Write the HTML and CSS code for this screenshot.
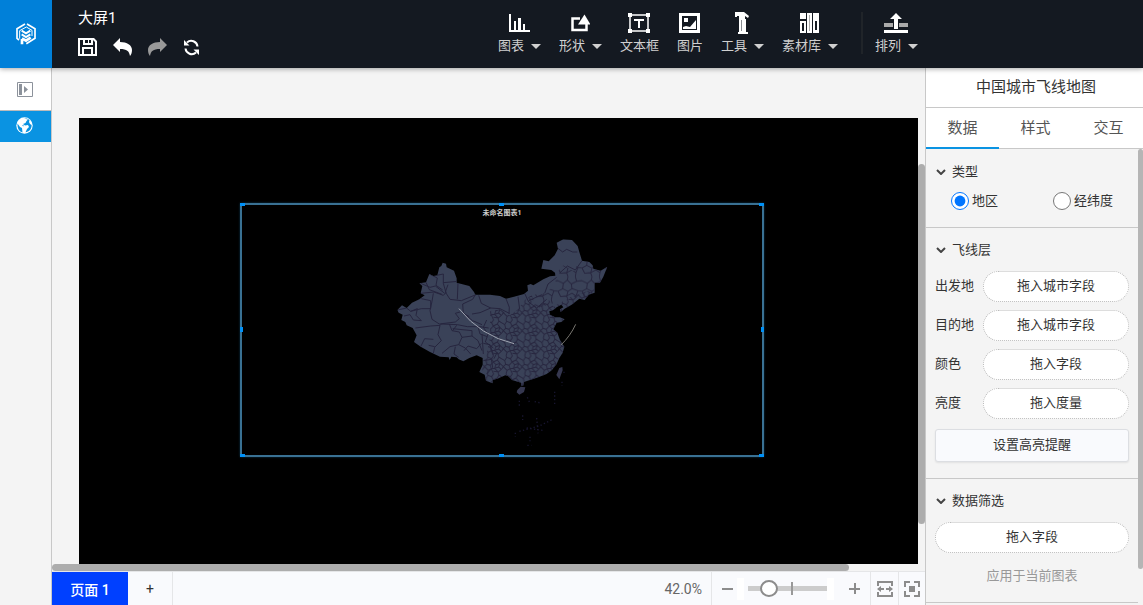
FILE: index.html
```html
<!DOCTYPE html>
<html lang="zh-CN">
<head>
<meta charset="utf-8">
<meta name="viewport" content="width=device-width, initial-scale=1">
<title>大屏1</title>
<link rel="stylesheet" href="styles.css">
</head>
<body>
<div class="app">
  <header class="topbar">
    <a class="logo" href="#" aria-label="首页">
      <svg width="20" height="22" viewBox="0 0 60 66" fill="none" stroke="#fff" stroke-width="5">
        <path d="M27 3 3 17v29l6 5M33 3l24 14v29L31 62"/>
        <path d="M31 12 11 23v24M31 12l17 10v17" stroke-width="3"/>
        <path d="M18 64V48M18 46l12 7 14-9" stroke-width="8"/>
        <path d="m17 23 13 8 13-8M17 34l13 8 13-8" stroke-width="6"/>
      </svg>
    </a>
    <div class="doc">
      <h1 class="doc-title">大屏1</h1>
      <div class="doc-actions">
        <button class="icon-btn" aria-label="保存">
          <svg width="19" height="18" viewBox="0 0 19 18"><path fill="#fff" fill-rule="evenodd" d="M0 0h16l3 3v15H0zM2 2v14h2V9h11v7h2V4l-2-2v5H5V2zM7 2v3h3V2zm4 0v3h2V2zM6 11v5h7v-5z"/></svg>
        </button>
        <button class="icon-btn" aria-label="撤销">
          <svg width="19" height="18" viewBox="0 0 19 18"><path fill="#fff" d="M0 7 7 0v4c7 0 12 3 12 8 0 3-1 5-2 6-1-5-3-7-10-7v3z"/></svg>
        </button>
        <button class="icon-btn" aria-label="重做" disabled>
          <svg width="19" height="18" viewBox="0 0 19 18"><path fill="#999" d="M19 7 12 0v4C5 4 0 7 0 12c0 3 1 5 2 6 1-5 3-7 10-7v3z"/></svg>
        </button>
        <button class="icon-btn" aria-label="刷新">
          <svg width="17" height="17" viewBox="0 0 17 17"><path fill="none" stroke="#fff" stroke-width="2" d="M4 3.500a6.300 6.300 0 0 1 10.500 4M13 13.500A6.300 6.300 0 0 1 2.500 9.500"/><path fill="#fff" d="M1 1v5.500h5.500zM16 16v-5.500h-5.500z"/></svg>
        </button>
      </div>
    </div>
    <nav class="toolbar" aria-label="组件">
      <button class="tool"><svg width="22" height="20" viewBox="0 0 22 20"><path fill="#fff" d="M1 1h2v16h19v2H1zM6 8h2v9H6zM10 5h3v12h-3zM15 11h2v6h-2z"/></svg><span class="tool-label">图表<i class="caret"></i></span></button>
      <button class="tool"><svg width="20" height="20" viewBox="0 0 20 20"><path fill="none" stroke="#fff" stroke-width="2.500" d="M10 5.500H2.500v11.500h14v-6"/><path fill="#fff" d="m14.500 1.500 6 10H8z"/></svg><span class="tool-label">形状<i class="caret"></i></span></button>
      <button class="tool"><svg width="24" height="22" viewBox="0 0 24 22"><path fill="none" stroke="#fff" stroke-width="1.500" d="M3 3h18v16H3z"/><path fill="#fff" d="M1 1h4v4H1zM19 1h4v4h-4zM1 17h4v4H1zM19 17h4v4h-4zM7 7h10v2h-4v7h-2V9H7z"/></svg><span class="tool-label">文本框</span></button>
      <button class="tool"><svg width="21" height="20" viewBox="0 0 21 20"><path fill="#fff" fill-rule="evenodd" d="M0 0h21v20H0zm3 3v14h15V3z"/><path fill="#fff" d="M5 5h4v4H5zM4 14l3-1 4 1 6-7v9H4z"/></svg><span class="tool-label">图片</span></button>
      <button class="tool"><svg width="14" height="22" viewBox="0 0 14 22"><path fill="#fff" d="M0 0h9l5 4-1 2-3-2v3H4V4H2v1H0zM4 7h7v13h2v2H3v-2h1z"/><path stroke="#8a8d92" d="M6.500 8v11"/></svg><span class="tool-label">工具<i class="caret"></i></span></button>
      <button class="tool"><svg width="19" height="20" viewBox="0 0 19 20"><path fill="#fff" fill-rule="evenodd" d="M0 0h6v6H0zM0 8h6v12H0zm2 2v8h2v-8zM7 0h5v20H7zM13 0h6v20h-6zm2 8v9h2V8z"/><path fill="#aaa" d="M9 2h1v16H9z"/></svg><span class="tool-label">素材库<i class="caret"></i></span></button>
      <span class="tool-divider"></span>
      <button class="tool"><svg width="24" height="20" viewBox="0 0 24 20"><path fill="#fff" d="M12 0 6 6h4v10h4V6h4zM0 17h24v3H0z"/><path fill="#aaa" d="M0 10h9v4H0zM15 10h9v4h-9z"/></svg><span class="tool-label">排列<i class="caret"></i></span></button>
    </nav>
  </header>

  <aside class="rail">
    <button class="rail-btn rail-toggle" aria-label="展开">
      <svg width="16" height="15" viewBox="0 0 16 15"><path fill="none" stroke="#8c929b" d="M.5.500h15v14H.5z"/><path fill="#8c929b" d="M2 2h3v11H2zM7 4l4 3.500L7 11z"/></svg>
    </button>
    <button class="rail-btn rail-active" aria-label="地图">
      <svg width="17" height="17" viewBox="0 0 17 17"><circle cx="8.500" cy="8.500" r="8.200" fill="#fff"/><path fill="#0a93e2" d="M1.500 6.500 4 10l2 1 .5 4.500C3.500 14.500 1.200 12 1.500 6.500zM8 1.500l4 1-1.500 1.500-1 2L7 7l2 1.500 3-.5 1 2-2 2-1.500 3.300C13 15 15.800 12 15.600 8L14 7l-1-2 .5-2L11 1.500zM7.500 8l-1.500.5 1.500 1z"/></svg>
    </button>
  </aside>

  <main class="stage">
    <div class="workspace">
      <div class="canvas">
        <section class="widget">
          <h2 class="widget-title">未命名图表1</h2>
          <svg class="map" width="225" height="225" viewBox="0 0 675 675" role="img" aria-label="中国地图">
            <defs>
              <clipPath id="land"><path d="M22 240 36 226 50 234 66 218 88 208 104 196 92 190 97 168 88 160 108 157 118 132 130 138 142 136 148 112 154 108 158 98 168 101 170 112 192 122 200 145 200 158 238 168 252 186 256 194 300 194 330 198 348 206 372 200 402 192 414 182 412 166 422 162 430 166 460 148 480 139 496 137 495 128 484 120 454 116 460 90 476 94 494 76 504 56 500 38 520 28 546 30 563 48 568 66 576 92 598 96 608 106 610 116 632 122 652 110 640 140 630 158 614 158 614 188 596 194 584 210 568 206 545 224 524 236 512 246 510 238 520 232 514 224 500 232 490 240 478 244 480 254 496 262 510 262 524 268 514 276 500 278 490 298 502 308 510 330 523 350 518 368 508 384 500 402 486 420 470 432 445 442 420 450 402 456 400 467 393 467 393 458 366 450 354 438 346 436 322 446 308 450 308 460 288 452 284 434 268 426 278 404 278 384 260 376 238 384 220 394 206 388 200 382 184 380 179 390 176 382 150 380 120 366 92 350 72 336 80 316 68 294 50 286 46 276 34 270 38 254 26 248Z"/></clipPath>
              <pattern id="prefectures" width="56" height="54" patternUnits="userSpaceOnUse"><path fill="none" stroke="#27263f" stroke-width="3" d="M0 9 8 14 14 4 25 8 30 18 42 12 47 3 56 9M14 4 12 0M47 3 45 0M25 8 31 0M8 14 11 25 4 32 0 28M11 25 21 28 30 18M21 28 24 38 15 43 4 32M30 18 38 26 34 37 24 38M42 12 50 22 38 26M50 22 56 28M50 22 46 33 34 37M46 33 54 40 56 38M54 40 45 48 34 37M45 48 45 54M24 38 31 54M15 43 12 54M0 38 4 32M45 48 31 46"/></pattern>
              <pattern id="prefectures-wide" width="72" height="70" patternUnits="userSpaceOnUse"><path fill="none" stroke="#27263f" stroke-width="3" d="M0 12 16 20 28 10 40 22 56 14 72 12M28 10 30 0M56 14 52 0M16 20 14 36 0 44M14 36 30 44 42 36 40 22M42 36 60 42 72 44M30 44 26 58 30 70M60 42 54 58 52 70M26 58 8 60 0 44M54 58 42 50 26 58"/></pattern>
            </defs>
            <g clip-path="url(#land)">
              <path fill="#3a4258" d="M0 0h675v675H0z"/>
              <path fill="url(#prefectures)" d="M300 244 330 238 360 256 384 238 404 210 425 195 440 235 478 210 490 230 540 202 600 180 620 250 540 480 270 480 278 410 290 370 300 320Z"/>
              <path fill="url(#prefectures-wide)" d="M498 130 520 106 550 124 572 88 670 90 630 165 600 200 540 204 490 220 440 235 425 195 464 190 496 165Z"/>
              <g fill="none" stroke="#27263f" stroke-width="3">
                <path d="m500 52 18 14 12-8 18 8 14 0M576 92l-20 28-24-12-24 22M464 190l10-28 26-20M404 190l12 26 24 18 30-26M416 212l40-18M348 206l10 26-1 20M384 200l5 38M256 194l-8 14-30 14 2 28 18 10M266 196l8 24 28 14 28 2 28 14M302 234l-32 14-24 4"/>
                <path d="m22 240 28-6 12 10 20-8-4 20 16 16-24-2-10-16-18 4M62 244l32-8 28 0 0-24-28-6M92 190l40-4 28 10 8-8-8-28 0-28-20 4M118 132l24 12-4 22 20 14M92 160l28 12 16-4 28 22M108 157l10 22 38 14M160 158l44-4M174 164l-8 22 14 22 34 4 44-18M204 158l-2 50M130 190l-4 24-6 28 6 26 22 14 48-6 12-10-12-16 14-4"/>
                <path d="M76 294 122 288 150 286 154 282 202 284 232 290 270 290 296 294M150 286l-6 28 10 18-20 20-4 18M178 282l8 20 22 4 8 16 30-4 0-16-58-6M216 322l-10 22-26 6-24 20M200 286l-12 16M206 344l20 10 16 18M246 318l18 14 12 30M264 290l6 22 22 8M276 312l4 60M116 346l18 4M92 350l12-24 26 2M196 350l-4 22 14 10M222 362l12-14 26 8 14-16M290 270l-10 22 14 20-8 24 24 18M220 250l28 22 28 12M280 340l20 4 10 30M280 392l24-4 4 24-18 20M322 366l-10 20"/>
              </g>
            </g>
            <path fill="#35374f" d="m508 414 9-3 1 10-10 27-9-13zM382 480l10-10 14 2-4 14-14 8-8-7z"/>
            <path fill="none" stroke="#17152f" stroke-width="4" stroke-dasharray="4 7" d="M522 425v8M516 455v12M494 485v40M388 512v16M398 556v14M376 608v12M420 620v14M412 646h12M388 604l60-16 40-20M410 594l54 8M440 564l4 46M412 502l8 18M434 515l18 4"/>
            <path fill="none" stroke="#9fa3b0" stroke-width="3" d="M207 236Q272 318 372 341"/>
            <path fill="none" stroke="#77756f" stroke-width="3" d="M557 283q-16 35-44 62"/>
          </svg>
          <i class="grip grip-nw"></i><i class="grip grip-n"></i><i class="grip grip-ne"></i>
          <i class="grip grip-w"></i><i class="grip grip-e"></i>
          <i class="grip grip-sw"></i><i class="grip grip-s"></i><i class="grip grip-se"></i>
        </section>
      </div>
      <div class="scroll-y"><div class="thumb-y"></div></div>
      <div class="scroll-x"><div class="thumb-x"></div></div>
    </div>
    <footer class="statusbar">
      <button class="page-tab">页面 1</button>
      <button class="page-add" aria-label="添加页面">+</button>
      <output class="zoom-value">42.0%</output>
      <div class="zoom">
        <button class="zoom-btn" aria-label="缩小"><svg width="11" height="11" viewBox="0 0 11 11"><path fill="#8c8c8c" d="M0 5h11v2H0z"/></svg></button>
        <div class="zoom-track"><input class="zoom-range" type="range" min="0" max="100" value="20" aria-label="缩放"></div>
        <button class="zoom-btn" aria-label="放大"><svg width="11" height="11" viewBox="0 0 11 11"><path fill="#8c8c8c" d="M0 5h5V0h2v5h4v2H7v4H5V7H0z"/></svg></button>
      </div>
      <button class="fit-btn" aria-label="适应宽度"><svg width="16" height="16" viewBox="0 0 16 16"><path fill="none" stroke="#8c8c8c" stroke-width="2" d="M1 5V1h14v4M1 11v4h14v-4"/><path fill="#8c8c8c" d="M0 8l4-3v2h3v2H4v2zM16 8l-4-3v2H9v2h3v2z"/></svg></button>
      <button class="fit-btn" aria-label="适应屏幕"><svg width="16" height="16" viewBox="0 0 16 16"><path fill="none" stroke="#8c8c8c" stroke-width="2" d="M1 6V1h5M10 1h5v5M15 10v5h-5M6 15H1v-5"/><path fill="#8c8c8c" d="M5 5h6v6H5z"/></svg></button>
    </footer>
  </main>

  <aside class="panel">
    <h2 class="panel-title">中国城市飞线地图</h2>
    <div class="tabs" role="tablist">
      <button class="tab tab-active" role="tab" aria-selected="true">数据</button>
      <button class="tab" role="tab" aria-selected="false">样式</button>
      <button class="tab" role="tab" aria-selected="false">交互</button>
    </div>
    <div class="panel-scroll">
      <div class="sections">
        <section class="section">
          <h3 class="section-title"><svg class="chevron" viewBox="0 0 10 6"><path d="m1 1 4 4 4-4"/></svg>类型</h3>
          <div class="radios">
            <label class="radio"><input type="radio" name="kind" checked>地区</label>
            <label class="radio"><input type="radio" name="kind">经纬度</label>
          </div>
        </section>
        <section class="section section-layer">
          <h3 class="section-title"><svg class="chevron" viewBox="0 0 10 6"><path d="m1 1 4 4 4-4"/></svg>飞线层</h3>
          <div class="fields">
            <div class="field"><span class="field-label" id="f1">出发地</span><button class="pill" aria-describedby="f1">拖入城市字段</button></div>
            <div class="field"><span class="field-label" id="f2">目的地</span><button class="pill" aria-describedby="f2">拖入城市字段</button></div>
            <div class="field"><span class="field-label" id="f3">颜色</span><button class="pill" aria-describedby="f3">拖入字段</button></div>
            <div class="field"><span class="field-label" id="f4">亮度</span><button class="pill" aria-describedby="f4">拖入度量</button></div>
          </div>
          <button class="highlight-btn">设置高亮提醒</button>
        </section>
        <section class="section section-filter">
          <h3 class="section-title"><svg class="chevron" viewBox="0 0 10 6"><path d="m1 1 4 4 4-4"/></svg>数据筛选</h3>
          <button class="pill">拖入字段</button>
          <p class="hint">应用于当前图表</p>
        </section>
      </div>
      <div class="panel-thumb"></div>
    </div>
  </aside>
</div>
</body>
</html>
```

FILE: styles.css
```css
* { box-sizing: border-box; }

body {
  margin: 0;
  background: #f4f4f4;
  color: #333;
  font: 13px/20px Roboto, "Noto Sans CJK SC", sans-serif;
}

h1, h2, h3, p { margin: 0; font-weight: 400; }

button {
  margin: 0;
  padding: 0;
  border: 0;
  background: none;
  color: inherit;
  font: inherit;
}

svg { display: block; flex: none; }

.app {
  display: grid;
  grid-template: 68px minmax(0, 1fr) / 52px minmax(0, 1fr) 218px;
  height: 100vh;
}

/* Top bar */
.topbar {
  z-index: 2;
  grid-column: 1 / -1;
  display: flex;
  padding-right: 225px;
  background: #141921;
  box-shadow: 0 1px 5px rgba(0, 0, 0, .35);
  color: #fff;
}
.logo {
  display: grid;
  place-items: center;
  width: 52px;
  background: #0080d9;
}
.doc { flex: 1; padding: 8px 0 0 26px; }
.doc-title { font-size: 15px; line-height: 20px; }
.doc-actions { display: flex; align-items: center; gap: 16px; padding-top: 10px; }
.toolbar { display: flex; gap: 18px; padding-top: 12px; }
.tool {
  display: flex;
  flex-direction: column;
  align-items: center;
  height: 44px;
  color: #d0d0d0;
}
.tool svg { height: 22px; }
.tool-label { display: flex; align-items: center; gap: 7px; padding-top: 2px; }
.caret {
  border: solid transparent;
  border-width: 5px 5px 0;
  border-top-color: #d0d0d0;
}
.tool-divider { width: 2px; height: 42px; margin: 0 -6px 0 5px; background: #202429; }

/* Left rail */
.rail { border-right: 1px solid #c8c8c8; }
.rail-btn { display: grid; place-items: center; width: 100%; }
.rail-toggle { height: 43px; padding-right: 1px; border-bottom: 1px solid #bbb; background: #fff; }
.rail-active { height: 31px; padding: 0 2px 2px 0; background: #0a93e2; }

/* Stage */
.stage { display: flex; flex-direction: column; min-height: 0; }
.workspace {
  flex: 1;
  display: grid;
  grid-template: minmax(0, 1fr) 7px / minmax(0, 1fr) 7px;
  min-height: 0;
}
.canvas {
  position: relative;
  overflow: hidden;
  margin: 50px 0 0 27px;
  background: #000;
}
.scroll-y { display: flex; flex-direction: column; padding-top: 96px; }
.thumb-y { height: 90%; border-radius: 4px; background: #adadad; }
.scroll-x { grid-column: 1 / -1; }
.thumb-x { width: 91.3%; height: 7px; border-radius: 4px; background: #adadad; }

.widget {
  position: absolute;
  top: 85px;
  left: 161px;
  width: 524px;
  height: 254px;
  border: 2px solid #397193;
  box-shadow: 0 0 2px #0a3a55;
  color: #ccc;
}
.widget-title { padding-top: 3px; font-size: 7px; line-height: 10px; font-weight: 700; text-align: center; }
.map { position: absolute; top: 25px; left: 148px; }
.grip { position: absolute; width: 5px; height: 3px; background: #0091f7; }
.grip-nw, .grip-n, .grip-ne { top: -2px; }
.grip-sw, .grip-s, .grip-se { bottom: -2px; }
.grip-nw, .grip-w, .grip-sw { left: -2px; }
.grip-ne, .grip-e, .grip-se { right: -2px; }
.grip-n, .grip-s { left: calc(50% - 3px); }
.grip-w, .grip-e { top: calc(50% - 3px); width: 3px; height: 5px; }

/* Status bar */
.statusbar {
  display: flex;
  align-items: stretch;
  height: 34px;
  border-top: 1px solid #e5e6e8;
  background: #f9fafd;
}
.page-tab { width: 76px; padding-top: 3px; background: #0040ff; color: #fff; font-size: 14px; font-weight: 500; }
.page-add { width: 45px; border-right: 1px solid #e5e6e8; font-size: 14px; }
.zoom-value { margin-left: auto; padding-right: 9px; color: #666; font-size: 14px; line-height: 34px; }
.zoom { display: flex; align-items: center; border-left: 1px solid #e5e6e8; }
.zoom-btn { display: grid; place-items: center; width: 25px; height: 100%; padding-left: 5px; }
.zoom-btn:last-child { width: 36px; }
.zoom-track { display: flex; align-items: center; height: 22px; padding-left: 4px; border: solid #fff; border-width: 0 7px; }
.zoom-range {
  width: 79px;
  height: 17px;
  margin: 0;
  appearance: none;
  background: linear-gradient(#999, #999) 43px center / 2px 13px no-repeat, linear-gradient(#ccc, #ccc) center / 100% 5px no-repeat;
}
.zoom-range::-webkit-slider-thumb {
  width: 18px;
  height: 17px;
  appearance: none;
  border: 2px solid #8c8c8c;
  border-radius: 50%;
  background: #fff;
}
.fit-btn { display: grid; place-items: center; width: 28px; border-left: 1px solid #e5e6e8; }
.fit-btn:last-child { width: 27px; }

/* Property panel */
.panel { display: flex; flex-direction: column; min-height: 0; border-left: 1px solid #c8c8c8; }
.panel-title {
  height: 40px;
  border-bottom: 1px solid #c8c8c8;
  background: #fff;
  font-size: 15px;
  line-height: 39px;
  text-align: center;
  padding-left: 3px;
}
.tabs { display: flex; height: 41px; border-bottom: 1px solid #c8c8c8; background: #fff; }
.tab { flex: 0 0 73px; height: 41px; border-bottom: 2px solid transparent; color: #555; font-size: 15px; }
.tab-active { border-color: #0a93e2; }
.panel-scroll { flex: 1; display: flex; min-height: 0; overflow: hidden; }
.sections { flex: 1; }
.panel-thumb { width: 5px; height: 92%; border-radius: 4px; background: #b5b5b5; }
.section { padding: 13px 9px 16px; border-bottom: 1px solid #c8c8c8; }
.section-layer { padding-top: 12px; }
.section-title { display: flex; align-items: center; gap: 6px; padding-left: 1px; font-size: 13px; line-height: 20px; }
.chevron { width: 10px; height: 6px; fill: none; stroke: #444; stroke-width: 2; }
.radios { display: flex; justify-content: space-between; padding: 9px 16px 0; }
.radio { display: flex; align-items: center; gap: 3px; }
.radio input { width: 18px; height: 18px; margin: 0; accent-color: #0075ff; }
.fields { display: grid; gap: 8px; padding-top: 11px; }
.field { display: grid; grid-template-columns: 48px 1fr; align-items: center; }
.field-label { padding-bottom: 2px; }
.pill {
  width: 100%;
  height: 31px;
  padding-bottom: 1px;
  border: 1px dotted #bbb;
  border-radius: 16px;
  background: #fff;
}
.highlight-btn {
  width: 100%;
  height: 33px;
  margin-top: 10px;
  padding-bottom: 2px;
  border: 1px solid #dcdee2;
  border-radius: 3px;
  background: #f9fafd;
  box-shadow: 0 1px 2px rgba(0, 0, 0, .08);
}
.section-filter { padding: 12px 9px 16px; }
.section-filter .pill { margin-top: 11px; }
.hint { padding-top: 13px; color: #999; text-align: center; }
```
